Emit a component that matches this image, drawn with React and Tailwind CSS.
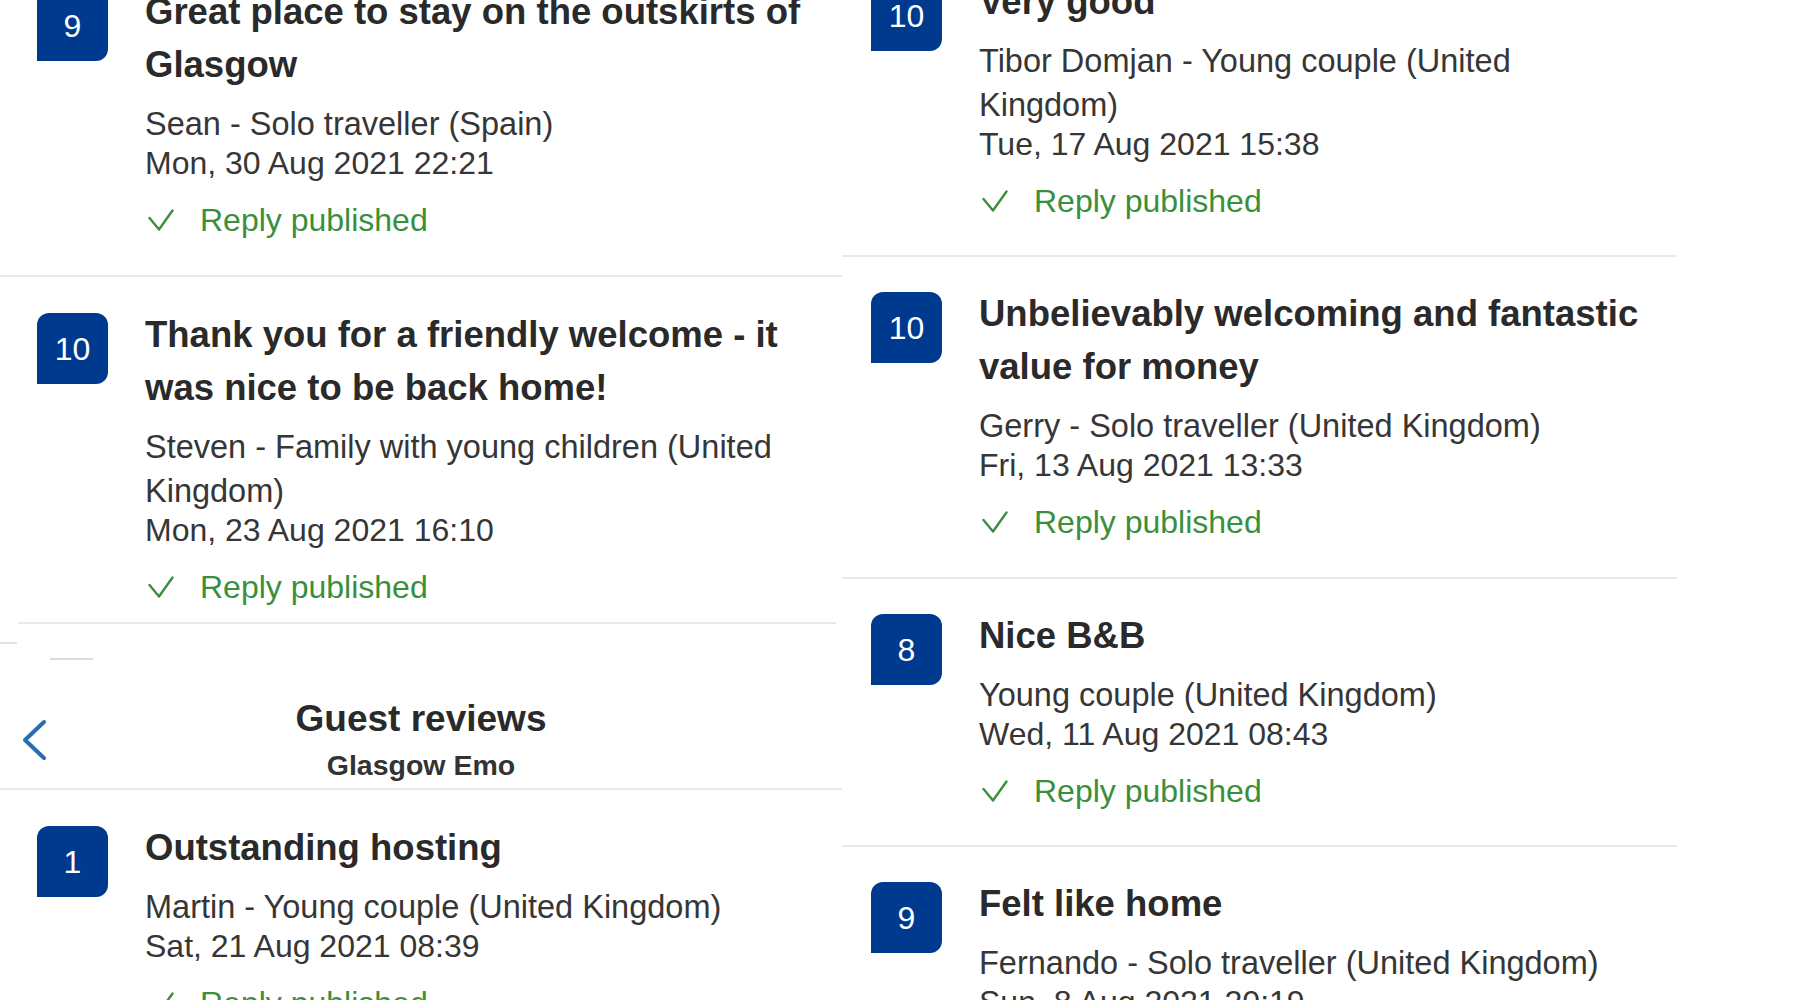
import React from "react";

const leftReviews = [
  {
    score: 9,
    title: "Great place to stay on the outskirts of Glasgow",
    guest: "Sean - Solo traveller (Spain)",
    date: "Mon, 30 Aug 2021 22:21",
    pad: "pl-[37px] pb-[35px]",
  },
  {
    score: 10,
    title: "Thank you for a friendly welcome - it was nice to be back home!",
    guest: "Steven - Family with young children (United Kingdom)",
    date: "Mon, 23 Aug 2021 16:10",
    pad: "pl-[37px] pt-[31px] pb-[15px]",
  },
];

const rightReviews = [
  {
    score: 10,
    title: "Very good",
    guest: "Tibor Domjan - Young couple (United Kingdom)",
    date: "Tue, 17 Aug 2021 15:38",
    pad: "pl-[29px] pb-[34px]",
  },
  {
    score: 10,
    title: "Unbelievably welcoming and fantastic value for money",
    guest: "Gerry - Solo traveller (United Kingdom)",
    date: "Fri, 13 Aug 2021 13:33",
    pad: "pl-[29px] pt-[30px] pb-[35px]",
  },
  {
    score: 8,
    title: "Nice B&B",
    guest: "Young couple (United Kingdom)",
    date: "Wed, 11 Aug 2021 08:43",
    pad: "pl-[29px] pt-[30px] pb-[34px]",
  },
  {
    score: 9,
    title: "Felt like home",
    guest: "Fernando - Solo traveller (United Kingdom)",
    date: "Sun, 8 Aug 2021 20:19",
    pad: "pl-[29px] pt-[30px]",
  },
];

const Check = () => (
  <svg
    width="26"
    height="22"
    viewBox="0 0 26 22"
    fill="none"
    stroke="#3a8f3c"
    strokeWidth="2.4"
    strokeLinecap="round"
    strokeLinejoin="round"
  >
    <polyline points="1.5,9 11,20.5 24.5,1.5" />
  </svg>
);

const Badge = ({ score }) => (
  <div className="mt-[5px] w-[71px] h-[71px] shrink-0 self-start flex items-center justify-center rounded-tl-[12px] rounded-tr-[12px] rounded-br-[12px] bg-[#003a8f] text-white text-[32px]">
    {score}
  </div>
);

const Review = ({ review }) => (
  <div className={"flex " + review.pad}>
    <Badge score={review.score} />
    <div className="ml-[37px] w-[670px]">
      <h3 className="text-[36.5px] leading-[53px] font-bold text-[#2a2a2a]">
        {review.title}
      </h3>
      <p className="mt-[11px] text-[32.5px] leading-[44px] text-[#363636]">
        {review.guest}
      </p>
      <p className="text-[32px] leading-[34px] text-[#363636]">{review.date}</p>
      <div className="mt-[20px] h-[40px] flex items-center">
        <span className="ml-[3px] flex">
          <Check />
        </span>
        <span className="ml-[26px] text-[32px] text-[#3a8f3c]">
          Reply published
        </span>
      </div>
    </div>
  </div>
);

const Divider = () => <div className="h-[2px] bg-[#e9e9e9]" />;

export default function App() {
  return (
    <div className="flex w-full h-[1000px] overflow-hidden bg-white font-['Liberation_Sans',Arial,sans-serif]">
      {/* left phone capture */}
      <div className="w-[842px] shrink-0 overflow-hidden">
        <div className="-mt-[15px]">
          <Review review={leftReviews[0]} />
          <Divider />
          <Review review={leftReviews[1]} />
          <div className="ml-[18px] mr-[6px] h-[2px] bg-[#e9e9e9]" />
          <div className="mt-[18px] w-[17px] h-[2px] bg-[#e4e4e4]" />
          <div className="mt-[14px] ml-[50px] w-[43px] h-[2px] bg-[#dcdcdc]" />

          <div className="pt-[37px] pb-[6px] grid grid-cols-[1fr_auto_1fr] items-center">
            <div className="pl-[21px] flex">
              <svg
                width="26"
                height="42"
                viewBox="0 0 26 42"
                fill="none"
                stroke="#2a6cb0"
                strokeWidth="4"
                strokeLinecap="round"
                strokeLinejoin="round"
              >
                <polyline points="23,3 4,21 23,39" />
              </svg>
            </div>
            <div className="flex flex-col items-center">
              <h2 className="text-[37px] leading-[44px] font-bold text-[#2a2a2a]">
                Guest reviews
              </h2>
              <p className="mt-[7px] text-[28.5px] leading-[34px] font-bold text-[#333333]">
                Glasgow Emo
              </p>
            </div>
            <div />
          </div>
          <Divider />

          <Review
            review={{
              score: 1,
              title: "Outstanding hosting",
              guest: "Martin - Young couple (United Kingdom)",
              date: "Sat, 21 Aug 2021 08:39",
              pad: "pl-[37px] pt-[31px]",
            }}
          />
        </div>
      </div>

      {/* right phone capture */}
      <div className="w-[835px] shrink-0 overflow-hidden">
        <div className="-mt-[25px]">
          {rightReviews.map((r, i) => (
            <div key={i}>
              {i > 0 && <Divider />}
              <Review review={r} />
            </div>
          ))}
        </div>
      </div>
    </div>
  );
}
